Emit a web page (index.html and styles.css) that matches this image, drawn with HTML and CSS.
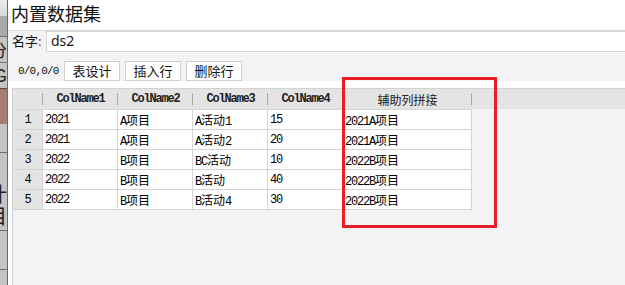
FILE: index.html
```html
<!DOCTYPE html>
<html lang="zh-CN">
<head>
    <meta charset="UTF-8">
    <title>内置数据集</title>
    <link rel="stylesheet" href="styles.css">
</head>
<body>
    <div class="side">
        <div class="side-top"></div>
        <div class="side-grey"></div>
        <div class="side-cell"><span>分</span></div>
        <div class="side-cell"><span class="latin">G</span></div>
        <div class="side-brown"></div>
        <div class="side-cell short"></div>
        <div class="side-cell tall"><span>计</span><span>目</span></div>
        <div class="side-cell mid"></div>
        <div class="side-cell rest"></div>
    </div>

    <div class="panel">
        <div class="title">内置数据集</div>

        <div class="name-row">
            <label class="name-label">名字<span class="colon">:</span></label>
            <div class="name-input">ds2</div>
        </div>

        <div class="toolbar">
            <span class="pos">0/0,0/0</span>
            <button class="btn">表设计</button>
            <button class="btn">插入行</button>
            <button class="btn">删除行</button>
        </div>

        <div class="grid">
            <table class="data">
                <colgroup>
                    <col class="c-num">
                    <col class="c-std"><col class="c-std"><col class="c-std"><col class="c-std">
                    <col class="c-wide">
                </colgroup>
                <thead>
                    <tr>
                        <th></th>
                        <th>ColName1</th>
                        <th>ColName2</th>
                        <th>ColName3</th>
                        <th>ColName4</th>
                        <th class="zh-head">辅助列拼接</th>
                    </tr>
                </thead>
                <tbody>
                    <tr><td class="num">1</td><td>2021</td><td>A<span class="zh">项目</span></td><td>A<span class="zh">活动</span>1</td><td>15</td><td>2021A<span class="zh">项目</span></td></tr>
                    <tr><td class="num">2</td><td>2021</td><td>A<span class="zh">项目</span></td><td>A<span class="zh">活动</span>2</td><td>20</td><td>2021A<span class="zh">项目</span></td></tr>
                    <tr><td class="num">3</td><td>2022</td><td>B<span class="zh">项目</span></td><td>BC<span class="zh">活动</span></td><td>10</td><td>2022B<span class="zh">项目</span></td></tr>
                    <tr><td class="num">4</td><td>2022</td><td>B<span class="zh">项目</span></td><td>B<span class="zh">活动</span></td><td>40</td><td>2022B<span class="zh">项目</span></td></tr>
                    <tr><td class="num">5</td><td>2022</td><td>B<span class="zh">项目</span></td><td>B<span class="zh">活动</span>4</td><td>30</td><td>2022B<span class="zh">项目</span></td></tr>
                </tbody>
            </table>
        </div>
    </div>

    <div class="highlight"></div>
</body>
</html>
```

FILE: styles.css
```css
* {
    box-sizing: border-box;
}

body {
    margin: 0;
    width: 625px;
    height: 285px;
    overflow: hidden;
    display: flex;
    position: relative;
    background: #fff;
    color: #111;
    font-family: "Noto Sans CJK SC", sans-serif;
}

/* clipped neighbour window on the left */
.side {
    width: 8px;
    flex: none;
    display: flex;
    flex-direction: column;
    background: #c4c4c4;
    border-right: 1px solid #6a6a6a;
}

.side-top {
    height: 16px;
    background: linear-gradient(#ececec, #d6d6d6);
}

.side-grey {
    height: 20px;
    background: #a9a9a9;
}

.side-cell {
    height: 26px;
    border-top: 1px solid #707070;
    display: flex;
    justify-content: flex-end;
    align-items: center;
    overflow: hidden;
    font-size: 17px;
    line-height: 1;
    color: #222;
}

.side-cell span {
    flex: none;
}

.side-cell .latin {
    font-family: "Liberation Sans", sans-serif;
    font-size: 18px;
}

.side-brown {
    height: 36px;
    border-top: 1px solid #5a4a48;
    background: #a67c75;
}

.side-cell.short {
    height: 28px;
    border-top: none;
}

.side-cell.tall {
    height: 78px;
    flex-direction: column;
    align-items: flex-end;
    justify-content: flex-end;
    gap: 2px;
    padding-bottom: 4px;
    font-size: 20px;
}

.side-cell.mid {
    height: 39px;
}

.side-cell.rest {
    flex: 1;
}

.panel {
    flex: 1;
    min-width: 0;
    display: flex;
    flex-direction: column;
}

.title {
    height: 30px;
    padding-left: 3px;
    font-size: 18px;
    line-height: 26px;
    color: #111;
}

.name-row {
    display: flex;
    height: 22px;
    border-top: 1px solid #dcdcdc;
    background: #f3f3f5;
}

.name-label {
    width: 38px;
    padding-left: 4px;
    font-size: 13px;
    line-height: 20px;
}

.colon {
    color: #7a3a8a;
}

.name-input {
    flex: 1;
    background: #fff;
    border: 1px solid #d4d4d4;
    border-right: none;
    padding-left: 4px;
    font-family: "Noto Sans", sans-serif;
    font-size: 14px;
    line-height: 18px;
    color: #1a1a1a;
}

.toolbar {
    display: flex;
    align-items: center;
    gap: 5px;
    padding: 9px 0 0 10px;
    background: #f3f3f5;
}

.pos {
    width: 41px;
    font-family: "Liberation Mono", monospace;
    font-size: 11px;
    letter-spacing: -0.8px;
    color: #111;
}

.btn {
    width: 56px;
    height: 20px;
    padding: 0;
    border: 1px solid #cfcfcf;
    background: #fff;
    font-family: "Noto Sans CJK SC", sans-serif;
    font-size: 13px;
    line-height: 18px;
    color: #111;
}

/* header strip runs to the right edge, body rows stop after the last column */
.grid {
    flex: 1;
    margin: 7px 0 0 4px;
    border-top: 1px solid #d2d2d2;
    border-left: 1px solid #d2d2d2;
    background: linear-gradient(#e4e4e4 0 20px, #f3f3f5 20px);
}

.data {
    table-layout: fixed;
    border-collapse: separate;
    border-spacing: 0;
    width: 459px;
}

.c-num { width: 30px; }
.c-std { width: 75px; }
.c-wide { width: 129px; }

.data th {
    position: relative;
    height: 21px;
    padding: 0;
    border-bottom: 1px solid #d6d6d6;
    background: #e4e4e4;
    font-family: "Liberation Mono", monospace;
    font-size: 12px;
    font-weight: bold;
    letter-spacing: -1.2px;
    color: #222;
    text-align: center;
}

.data th::after {
    content: "";
    position: absolute;
    right: 0;
    top: 4px;
    bottom: 4px;
    width: 1px;
    background: #a8a8a8;
}

.data th.zh-head {
    font-family: "Noto Sans CJK SC", sans-serif;
    font-size: 12px;
    font-weight: normal;
    letter-spacing: 0;
}

.data td {
    height: 20px;
    padding: 0 2px;
    border-right: 1px solid #d4d4d4;
    border-bottom: 1px solid #d4d4d4;
    background: #fff;
    font-family: "Liberation Mono", "Noto Sans CJK SC", monospace;
    font-size: 12px;
    letter-spacing: -1.2px;
    color: #000;
    white-space: nowrap;
    overflow: hidden;
}

.data td.num {
    background: #e4e4e4;
    text-align: center;
    padding: 0;
}

.zh {
    font-family: "Noto Sans CJK SC", sans-serif;
    font-size: 12px;
    letter-spacing: 0;
}

/* red annotation frame drawn over the screenshot */
.highlight {
    position: absolute;
    left: 342px;
    top: 77px;
    width: 155px;
    height: 151px;
    border: 3px solid #e81e27;
}
```
